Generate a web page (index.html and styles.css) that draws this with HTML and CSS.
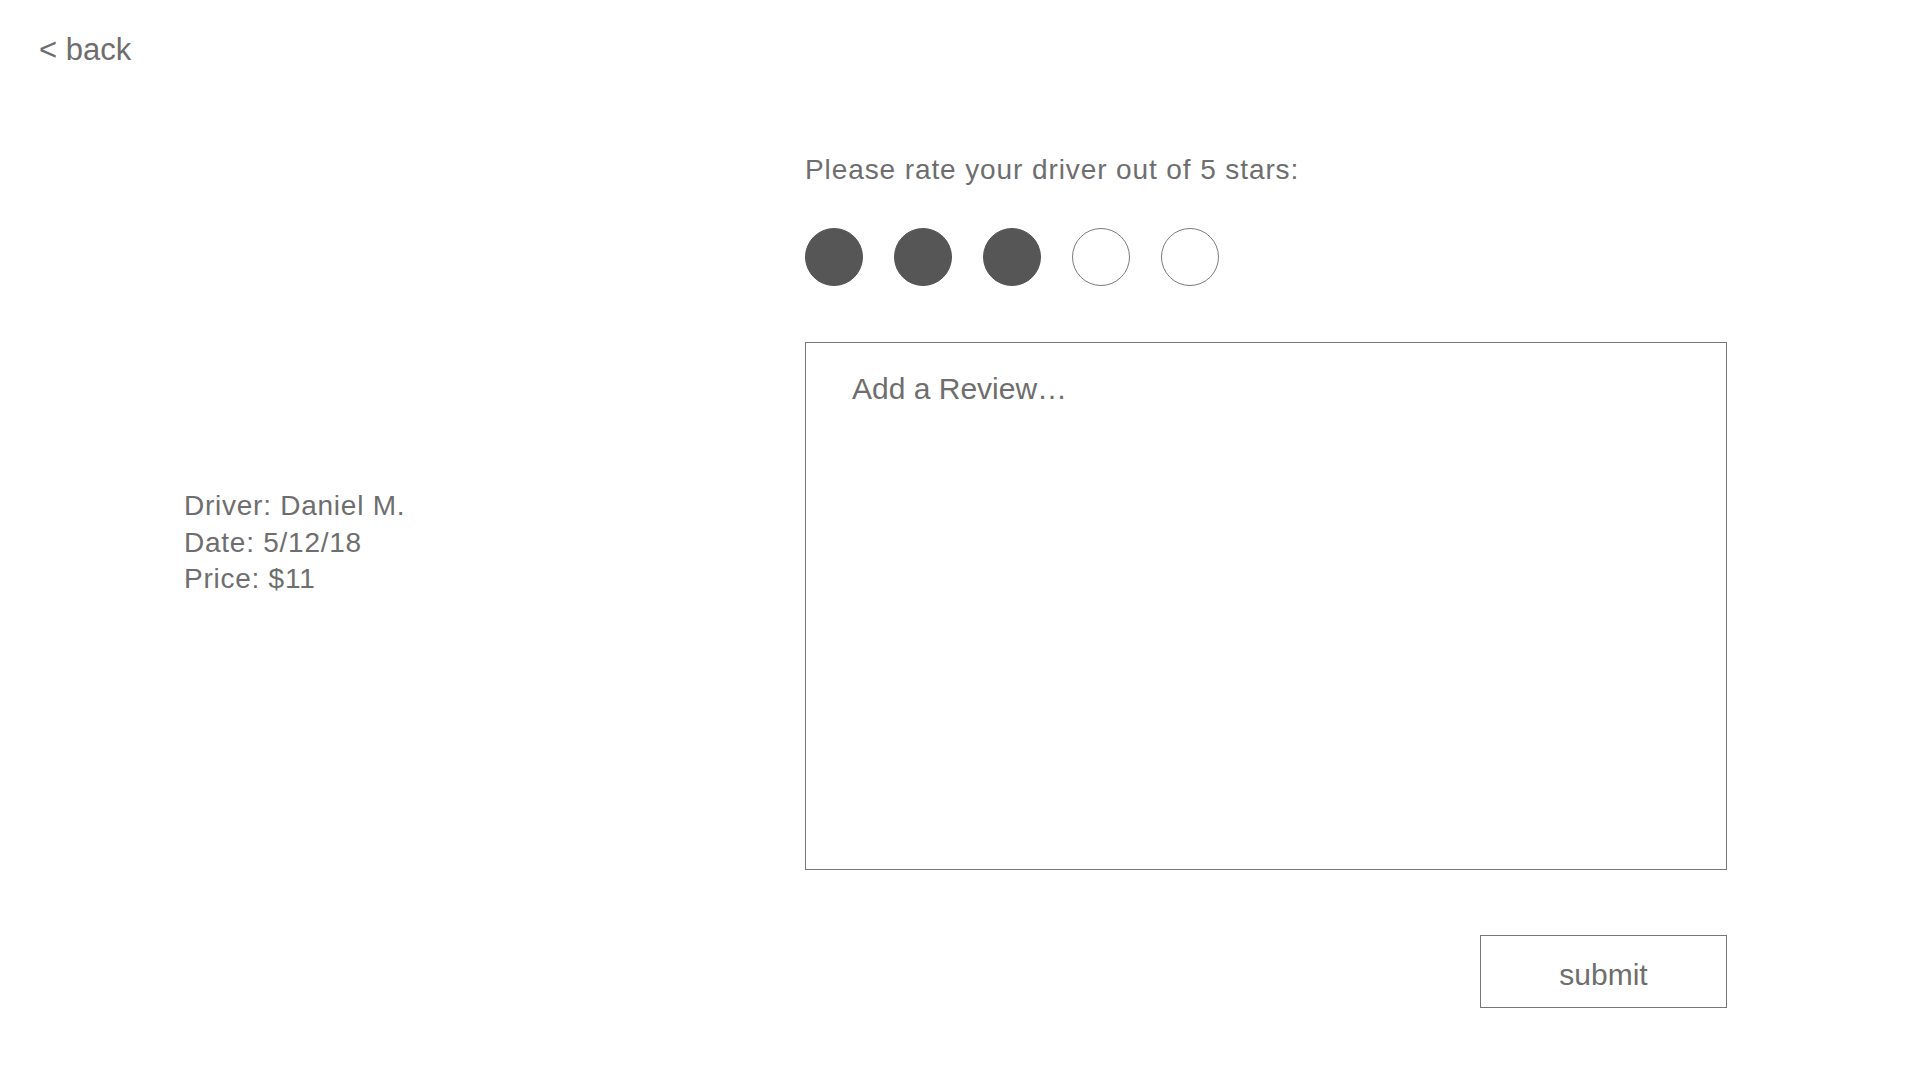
FILE: index.html
```html
<!DOCTYPE html>
<html lang="en">
<head>
<meta charset="utf-8">
<title>Rate your driver</title>
<link rel="stylesheet" href="styles.css">
</head>
<body>
<header class="topbar">
  <a class="back-link" href="#">&lt; back</a>
</header>
<main class="layout">
  <section class="trip-info">
    <p class="trip-line">Driver: Daniel M.</p>
    <p class="trip-line">Date: 5/12/18</p>
    <p class="trip-line">Price: $11</p>
  </section>
  <section class="review">
    <h1 class="review-title">Please rate your driver out of 5 stars:</h1>
    <div class="rating">
      <span class="dot dot-filled"></span>
      <span class="dot dot-filled"></span>
      <span class="dot dot-filled"></span>
      <span class="dot"></span>
      <span class="dot"></span>
    </div>
    <textarea class="review-box" placeholder="Add a Review…"></textarea>
    <button class="submit-btn" type="button">submit</button>
  </section>
</main>
</body>
</html>
```

FILE: styles.css
```css
* {
  box-sizing: border-box;
}

html, body {
  margin: 0;
  padding: 0;
  background: #ffffff;
}

body {
  width: 1920px;
  height: 1080px;
  font-family: "Liberation Sans", Arial, Helvetica, sans-serif;
  color: #6e6e6e;
  overflow: hidden;
}

.topbar {
  padding: 32px 0 0 39px;
  height: 68px;
}

.back-link {
  display: inline-block;
  font-size: 31px;
  line-height: 36px;
  color: #6e6e6e;
  text-decoration: none;
}

.layout {
  display: flex;
  padding-left: 184px;
}

.trip-info {
  width: 621px;
  padding-top: 420px;
}

.trip-line {
  margin: 0;
  font-size: 28px;
  line-height: 36.5px;
  letter-spacing: 0.75px;
}

.review {
  width: 922px;
  padding-top: 86px;
  display: flex;
  flex-direction: column;
}

.review-title {
  margin: 0;
  font-weight: normal;
  font-size: 28px;
  line-height: 32px;
  letter-spacing: 0.9px;
}

.rating {
  display: flex;
  gap: 31px;
  margin-top: 42px;
}

.dot {
  width: 58px;
  height: 58px;
  border-radius: 50%;
  border: 1px solid #7a7a7a;
  background: #ffffff;
}

.dot-filled {
  background: #565656;
  border-color: #565656;
}

.review-box {
  display: block;
  margin-top: 56px;
  width: 922px;
  height: 528px;
  border: 1px solid #777777;
  border-radius: 0;
  padding: 29px 40px 20px 46px;
  font-family: "Liberation Sans", Arial, Helvetica, sans-serif;
  font-size: 30px;
  line-height: 34px;
  color: #6e6e6e;
  resize: none;
  outline: none;
  background: #ffffff;
}

.review-box::placeholder {
  color: #6e6e6e;
  opacity: 1;
}

.submit-btn {
  align-self: flex-end;
  margin-top: 65px;
  width: 247px;
  height: 73px;
  border: 1px solid #777777;
  border-radius: 0;
  background: #ffffff;
  padding: 22px 0 15px;
  font-family: "Liberation Sans", Arial, Helvetica, sans-serif;
  font-size: 30px;
  line-height: 34px;
  color: #6e6e6e;
  cursor: pointer;
}
```
